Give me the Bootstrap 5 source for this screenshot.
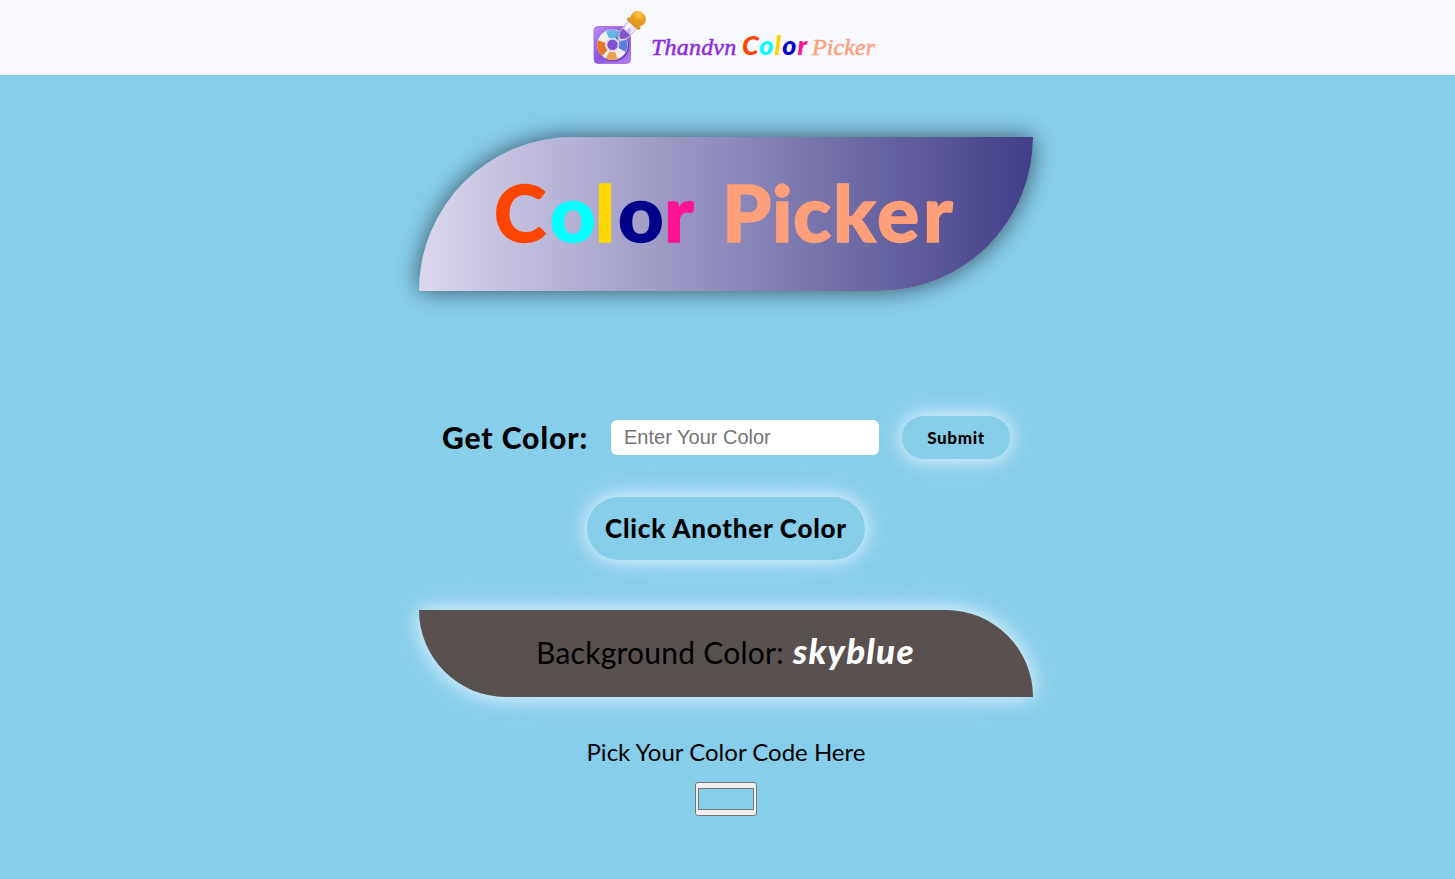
<!DOCTYPE html>
<html lang="en">
<head>
<meta charset="utf-8">
<meta name="viewport" content="width=device-width, initial-scale=1">
<title>Thandvn Color Picker</title>
<link href="https://cdn.jsdelivr.net/npm/bootstrap@5.3.0/dist/css/bootstrap.min.css" rel="stylesheet">
<style>
body{background:skyblue;color:#000;font-family:Lato,sans-serif;height:879px;overflow:hidden;white-space:nowrap}
.top-bar{height:75px;background:ghostwhite}
.brand-row{height:75px;width:282px;margin-left:593px}
.script{font-family:"Liberation Serif",serif;font-style:italic;font-weight:700;line-height:30px;margin-left:2px}
.s1{color:blueviolet;font-size:24px;width:91px;font-weight:400;letter-spacing:.2px;-webkit-text-stroke:.5px}
.s2{font-family:Lato,sans-serif;font-weight:900;font-size:27px;width:70px;letter-spacing:1.1px}
.s3{font-size:24px;font-weight:400;letter-spacing:.1px;-webkit-text-stroke:.5px}
.orange{color:orangered}.aqua{color:aqua}.gold{color:gold}.blue{color:mediumblue}.navy{color:darkblue}.pink{color:deeppink}.salmon{color:lightsalmon}
.main-col{width:614px;margin-left:419px}
.banner{height:154px;margin-top:62px;border-radius:154px 0;background:linear-gradient(90deg,#dad7ed,#423e89);box-shadow:0 0 25px rgba(0,0,0,.6);padding-left:75px}
.banner h1{font-size:79px;font-weight:900;line-height:150px}
.banner h1 span{display:inline-block;-webkit-text-stroke:1.3px}
.color-form{margin-top:125px;height:43px;padding-left:23px}
.form-label-lg{width:169px;font-size:30px;line-height:43px;font-weight:900;letter-spacing:.95px}
.color-input{width:268px;height:35px;border:0;border-radius:6px;font:20px "Liberation Sans",sans-serif;padding:0 13px;position:relative;z-index:1}
.color-input::placeholder{color:#757575;opacity:1}
.glow{background:skyblue;box-shadow:0 0 20px rgba(255,255,255,.85),0 0 50px rgba(170,225,255,.5);border:0;color:#000;font-weight:900}
.btn-send{width:108px;height:43px;margin-left:23px;font-size:17px;letter-spacing:.65px;line-height:41px}
.btn-next{width:278px;height:63px;margin-top:38px;font-size:26px;letter-spacing:.75px}
.result{height:87px;margin-top:50px;border-radius:0 87px;font-size:30px;padding:0 0 7px 117px}
.result.glow{background:#585150}
.result .label-text{width:257px;letter-spacing:.25px}
.result .name{font-size:35px;font-weight:900;font-style:italic;color:#fff;letter-spacing:1.2px}
.hint{margin-top:37px;font-size:24px;line-height:36px}
.swatch{width:62px;height:34px;margin-top:12px;background:#efefef;border:1px solid #767676;border-radius:3px;padding:5px 2px}
.swatch div{height:22px;background:skyblue;border:1px solid #777}
</style>
</head>
<body>
<nav class="top-bar">
  <div class="brand-row d-flex align-items-center">
    <svg width="56" height="56" viewBox="0 0 56 56" class="flex-shrink-0">
      <defs>
        <linearGradient id="tile" x1="0" y1="0" x2="1" y2="1"><stop stop-color="#ba8cf4"/><stop offset=".5" stop-color="#8d55dc"/><stop offset="1" stop-color="#b17cf2"/></linearGradient>
        <radialGradient id="bulb" cx=".35" cy=".3"><stop stop-color="#ffcb4d"/><stop offset="1" stop-color="#e79a20"/></radialGradient>
      </defs>
      <rect x="1" y="16.500" width="36.500" height="37" rx="4" fill="url(#tile)" stroke="#9a68dd" stroke-width=".8"/>
      <circle cx="20.500" cy="35.500" r="15.800" fill="#6e3cb6"/><circle cx="19.500" cy="34.700" r="15.300" fill="#f1f0f5"/>
      <g fill="none" stroke-width="8">
        <path d="M14.500 25A11 11 0 0 1 24 25" stroke="#66b5e5"/><path d="M24 25A11 11 0 0 1 28.500 28.500" stroke="#377bb6"/>
        <path d="M29.500 30.500A11 11 0 0 1 29 40" stroke="#5a7fe0"/><path d="M23.500 45.500A11 11 0 0 1 14.500 45" stroke="#eda34e"/>
        <path d="M12 43A11 11 0 0 1 8.700 31.500" stroke="#e97728"/>
      </g>
      <circle cx="19.500" cy="34.700" r="6" fill="#8151cf" stroke="#e0dced" stroke-width="1.500"/>
      <g transform="translate(30 25.500) rotate(42) scale(1.12 1)">
        <path d="M-5-15H5V-3Q4.500 4 0 7Q-4.500 4-5-3z" fill="#e6ddf6" fill-opacity=".75" stroke="#b5a8d1" stroke-width=".7"/>
        <path d="M-4.300-5H4.300V-2Q3 3 0 4Q-3 3-4.300-2z" fill="#8755cc"/>
        <path d="M-2-14V-6" stroke="#fff" stroke-width="2.500"/>
        <rect x="-7.500" y="-18" width="15" height="4" rx="2" fill="#d8932a"/>
        <path d="M-5.500-17Q-7-20-7-23A7 7 0 0 1 7-23Q7-20 5.500-17z" fill="url(#bulb)"/>
      </g>
    </svg>
    <div class="script pt-3 d-flex align-items-baseline">
      <span class="s1">Thandvn</span><span class="s2"><span class="orange">C</span><span class="aqua">o</span><span class="gold">l</span><span class="blue">o</span><span class="pink">r</span></span><span class="s3 salmon">Picker</span>
    </div>
  </div>
</nav>
<main class="main-col d-flex flex-column">
  <header class="banner">
    <h1 class="m-0 d-flex"><span class="orange" style="width:56px">C</span><span class="aqua" style="width:45px">o</span><span class="gold" style="width:23px">l</span><span class="navy" style="width:46px">o</span><span class="pink" style="width:58px">r</span><span class="salmon" style="width:50px">P</span><span class="salmon" style="width:21px">i</span><span class="salmon" style="width:40px">c</span><span class="salmon" style="width:44px">k</span><span class="salmon" style="width:46px">e</span><span class="salmon">r</span></h1>
  </header>
  <form class="color-form d-flex align-items-center">
    <label class="form-label-lg" for="color-name">Get Color:</label>
    <input id="color-name" class="color-input" placeholder="Enter Your Color">
    <button type="button" class="btn-send glow rounded-pill p-0">Submit</button>
  </form>
  <button type="button" class="btn-next glow rounded-pill p-0 align-self-center">Click Another Color</button>
  <section class="result glow fw-normal d-flex align-items-center"><div class="d-flex align-items-baseline"><span class="label-text">Background Color:</span><span class="name">skyblue</span></div></section>
  <div class="hint text-center">Pick Your Color Code Here</div>
  <div class="swatch align-self-center"><div></div></div>
</main>
<script src="https://cdn.jsdelivr.net/npm/bootstrap@5.3.0/dist/js/bootstrap.bundle.min.js"></script>
</body>
</html>
